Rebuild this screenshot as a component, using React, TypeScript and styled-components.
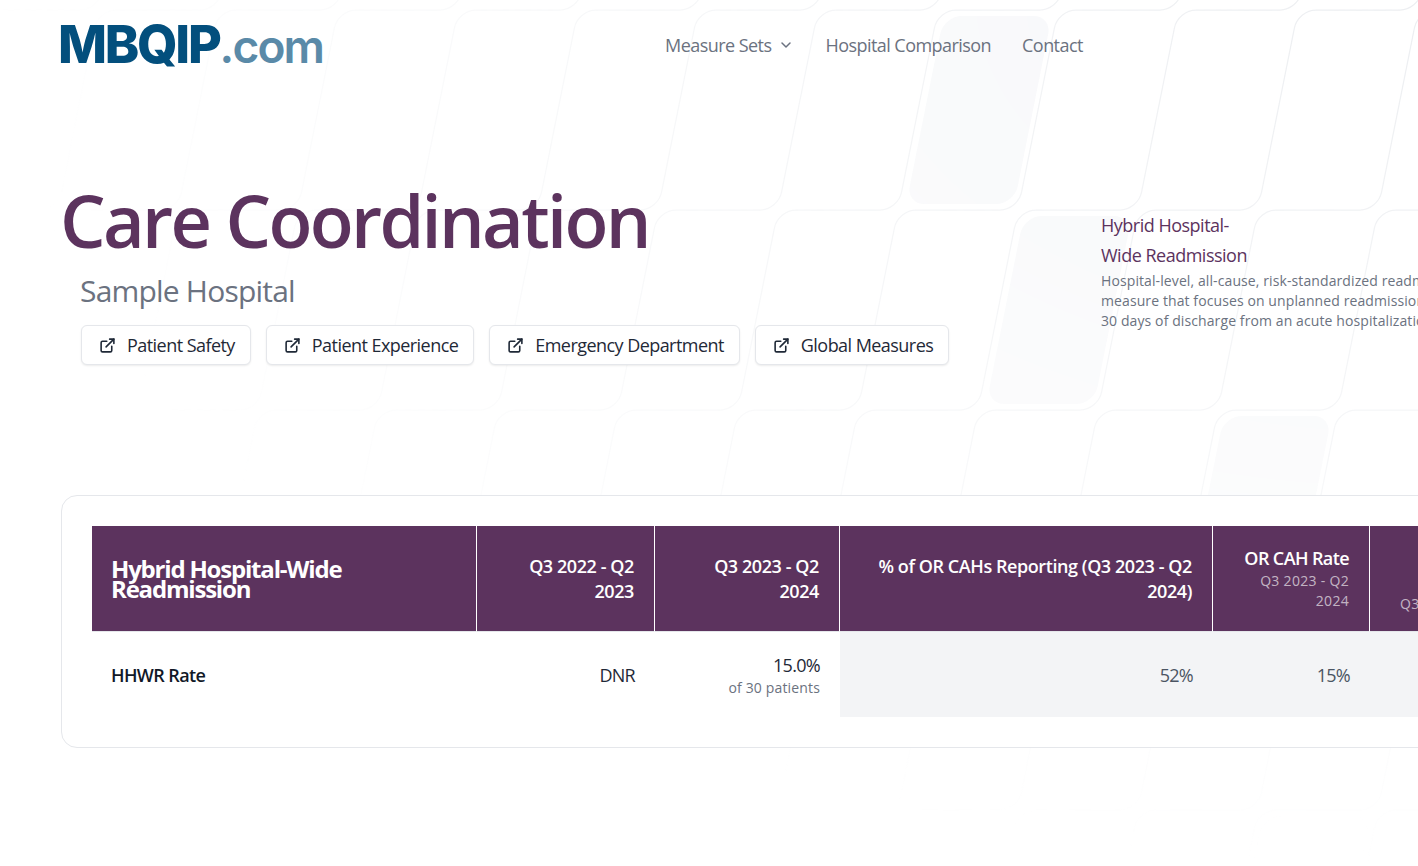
import React from 'react'
import styled, { createGlobalStyle } from 'styled-components'
import { ChevronDown, ExternalLink } from 'lucide-react'

const SKEW = 0.2
const CELL_W = 120
const CELL_H = 200
const ARC = 18

// Background tiles, in unskewed coordinates: x is where the left edge sits on the top row
const filledCells = [
  { x: 939, row: 0 },
  { x: 1059, row: 1 },
  { x: 1299, row: 2 },
  { x: 1418, row: 4 },
]

const buildGridPath = () => {
  let d = ''
  for (let row = -1; row < 6; row++) {
    for (let col = -2; col < 18; col++) {
      const x = col * CELL_W - 22
      const y = row * CELL_H
      d += `M${x + CELL_W - ARC} ${y}H${x + ARC}A${ARC} ${ARC} 0 0 0 ${x} ${y + ARC}V${y + CELL_H - ARC}A${ARC} ${ARC} 0 0 1 ${x - ARC} ${y + CELL_H}`
    }
  }
  return d
}

const BackgroundGrid = () => (
  <GridSvg aria-hidden="true">
    <g transform={`translate(0 10) matrix(1 0 ${-SKEW} 1 0 0)`}>
      {filledCells.map((cell) => (
        <rect
          key={`${cell.x}-${cell.row}`}
          x={cell.x + 6}
          y={cell.row * CELL_H + 6}
          width={CELL_W - 12}
          height={CELL_H - 12}
          rx={ARC}
          fill="#f6f7f9"
        />
      ))}
      <path d={buildGridPath()} fill="none" stroke="#eceef1" strokeWidth="1.25" />
    </g>
  </GridSvg>
)

const App = () => (
  <Page>
    <GlobalStyle />
    <BackgroundGrid />
    <Header>
      <Logo>
        <LogoMark>MBQIP</LogoMark>
        <LogoDomain>.com</LogoDomain>
      </Logo>
      <Nav>
        <NavItem>
          Measure Sets <ChevronDown size={16} strokeWidth={2.25} />
        </NavItem>
        <NavItem>Hospital Comparison</NavItem>
        <NavItem>Contact</NavItem>
      </Nav>
    </Header>

    <Hero>
      <HeroMain>
        <Title>Care Coordination</Title>
        <Subtitle>Sample Hospital</Subtitle>
        <ChipRow>
          {['Patient Safety', 'Patient Experience', 'Emergency Department', 'Global Measures'].map((label) => (
            <Chip key={label}>
              <ExternalLink size={17} strokeWidth={2.25} />
              {label}
            </Chip>
          ))}
        </ChipRow>
      </HeroMain>
      <HeroAside>
        <AsideTitle>
          Hybrid Hospital-
          <br />
          Wide Readmission
        </AsideTitle>
        <AsideText>
          Hospital-level, all-cause, risk-standardized readmission rate
          <br />
          measure that focuses on unplanned readmissions within
          <br />
          30 days of discharge from an acute hospitalization.
        </AsideText>
      </HeroAside>
    </Hero>

    <Card>
      <Table>
        <colgroup>
          <col style={{ width: 385 }} />
          <col style={{ width: 178 }} />
          <col style={{ width: 185 }} />
          <col style={{ width: 373 }} />
          <col style={{ width: 157 }} />
          <col style={{ width: 177 }} />
        </colgroup>
        <thead>
          <tr>
            <MeasureHead>
              <MeasureTitle>Hybrid Hospital-Wide Readmission</MeasureTitle>
            </MeasureHead>
            <HeadCell>Q3 2022 - Q2 2023</HeadCell>
            <HeadCell>Q3 2023 - Q2 2024</HeadCell>
            <HeadCell>% of OR CAHs Reporting (Q3 2023 - Q2 2024)</HeadCell>
            <HeadCell>
              <HeadTitle>OR CAH Rate</HeadTitle>
              <HeadNote>Q3 2023 - Q2 2024</HeadNote>
            </HeadCell>
            <HeadCell>
              <HeadTitle>
                National
                <br />
                CAH Rate
              </HeadTitle>
              <HeadNote>Q3 2023 - Q2 2024</HeadNote>
            </HeadCell>
          </tr>
        </thead>
        <tbody>
          <tr>
            <RowLabel>HHWR Rate</RowLabel>
            <ValueCell>DNR</ValueCell>
            <StackedValueCell>
              15.0%
              <ValueNote>of 30 patients</ValueNote>
            </StackedValueCell>
            <BenchmarkCell>52%</BenchmarkCell>
            <BenchmarkCell>15%</BenchmarkCell>
            <BenchmarkCell>15%</BenchmarkCell>
          </tr>
        </tbody>
      </Table>
    </Card>
  </Page>
)

export default App

const GlobalStyle = createGlobalStyle`
  html, body {
    margin: 0;
    background: #fff;
  }
  body {
    font-family: "Open Sans", "Noto Sans", sans-serif;
  }
`

const Page = styled.div`
  position: relative;
  width: 1418px;
  height: 866px;
  overflow: hidden;
  background: #fff;
`

const GridSvg = styled.svg`
  position: absolute;
  inset: 0;
  width: 100%;
  height: 100%;
  mask-image: radial-gradient(100% 100% at top right, #fff, transparent);
`

const Header = styled.header`
  position: relative;
  display: flex;
  align-items: center;
  height: 90px;
  padding-left: 58px;
`

const Logo = styled.div`
  display: flex;
  align-items: baseline;
  width: 607px;
  font-family: Inter, sans-serif;
  line-height: 1;
`

const LogoMark = styled.span`
  font-size: 52px;
  font-weight: 800;
  letter-spacing: -2.3px;
  color: #034f7d;
`

const LogoDomain = styled.span`
  font-size: 46px;
  font-weight: 600;
  letter-spacing: -1.8px;
  color: #5a8aa8;
`

const Nav = styled.nav`
  display: flex;
  gap: 31px;
`

const NavItem = styled.a`
  display: flex;
  align-items: center;
  gap: 7px;
  font-size: 18px;
  font-weight: 500;
  letter-spacing: -0.55px;
  color: #6b7280;
`

const Hero = styled.section`
  position: relative;
  display: flex;
  height: 405px;
  padding: 90px 0 0 61px;
  box-sizing: border-box;
`

const HeroMain = styled.div`
  flex: 0 0 1040px;
`

const Title = styled.h1`
  margin: 0 0 0 -1px;
  font-size: 72px;
  line-height: 80px;
  font-weight: 600;
  letter-spacing: -2.65px;
  color: #5c335e;
`

const Subtitle = styled.p`
  margin: 13px 0 0 19px;
  font-size: 30px;
  line-height: 36px;
  font-weight: 400;
  letter-spacing: -0.8px;
  color: #6b7280;
`

const ChipRow = styled.div`
  display: flex;
  gap: 15px;
  margin: 16px 0 0 20px;
`

const Chip = styled.a`
  display: flex;
  align-items: center;
  gap: 11px;
  height: 40px;
  padding: 0 15px 0 17px;
  box-sizing: border-box;
  border: 1px solid #e5e7eb;
  border-radius: 6px;
  background: #fff;
  box-shadow: 0 1px 2px rgba(0, 0, 0, 0.08);
  font-size: 18px;
  font-weight: 500;
  letter-spacing: -0.55px;
  color: #1f2937;
`

const HeroAside = styled.aside`
  flex: 0 0 420px;
  padding-top: 30px;
`

const AsideTitle = styled.h3`
  margin: 0;
  font-size: 18px;
  line-height: 30px;
  font-weight: 500;
  letter-spacing: -0.5px;
  color: #5c335e;
`

const AsideText = styled.p`
  margin: 1px 0 0;
  font-size: 14px;
  line-height: 20px;
  letter-spacing: 0.1px;
  white-space: nowrap;
  color: #6b7280;
`

const Card = styled.div`
  position: relative;
  width: 1520px;
  height: 253px;
  margin-left: 61px;
  padding: 30px;
  box-sizing: border-box;
  border: 1px solid #e5e7eb;
  border-radius: 16px;
  background: #fff;
`

const Table = styled.table`
  table-layout: fixed;
  width: 1455px;
  border-collapse: separate;
  border-spacing: 0;
`

const HeadCell = styled.th`
  height: 106px;
  padding: 0 20px 0 19px;
  box-sizing: border-box;
  border-right: 1px solid #fff;
  border-bottom: 1px solid #e5e7eb;
  background: #5c335e;
  text-align: right;
  font-size: 18px;
  line-height: 25px;
  font-weight: 600;
  letter-spacing: -0.42px;
  color: #fff;
`

const MeasureHead = styled(HeadCell)`
  text-align: left;
`

const MeasureTitle = styled.span`
  display: block;
  font-size: 24px;
  line-height: 20px;
  font-weight: 700;
  letter-spacing: -1.2px;
`

const HeadTitle = styled.span`
  display: block;
  letter-spacing: -0.6px;
`

const HeadNote = styled.span`
  display: block;
  font-size: 14px;
  line-height: 20px;
  font-weight: 400;
  letter-spacing: 0.3px;
  color: rgba(255, 255, 255, 0.65);
`

const ValueCell = styled.td`
  height: 85px;
  padding: 0 20px 0 19px;
  box-sizing: border-box;
  text-align: right;
  font-size: 18px;
  line-height: 24px;
  letter-spacing: -0.7px;
  color: #1f2937;
`

const StackedValueCell = styled(ValueCell)`
  padding-top: 2px;
`

const RowLabel = styled(ValueCell)`
  text-align: left;
  font-weight: 600;
  letter-spacing: -0.6px;
  color: #111827;
`

const ValueNote = styled.span`
  display: block;
  margin-top: 1px;
  font-size: 14px;
  line-height: 20px;
  letter-spacing: 0.15px;
  color: #6b7280;
`

const BenchmarkCell = styled(ValueCell)`
  background: #f3f4f6;
  color: #4b5563;
`
